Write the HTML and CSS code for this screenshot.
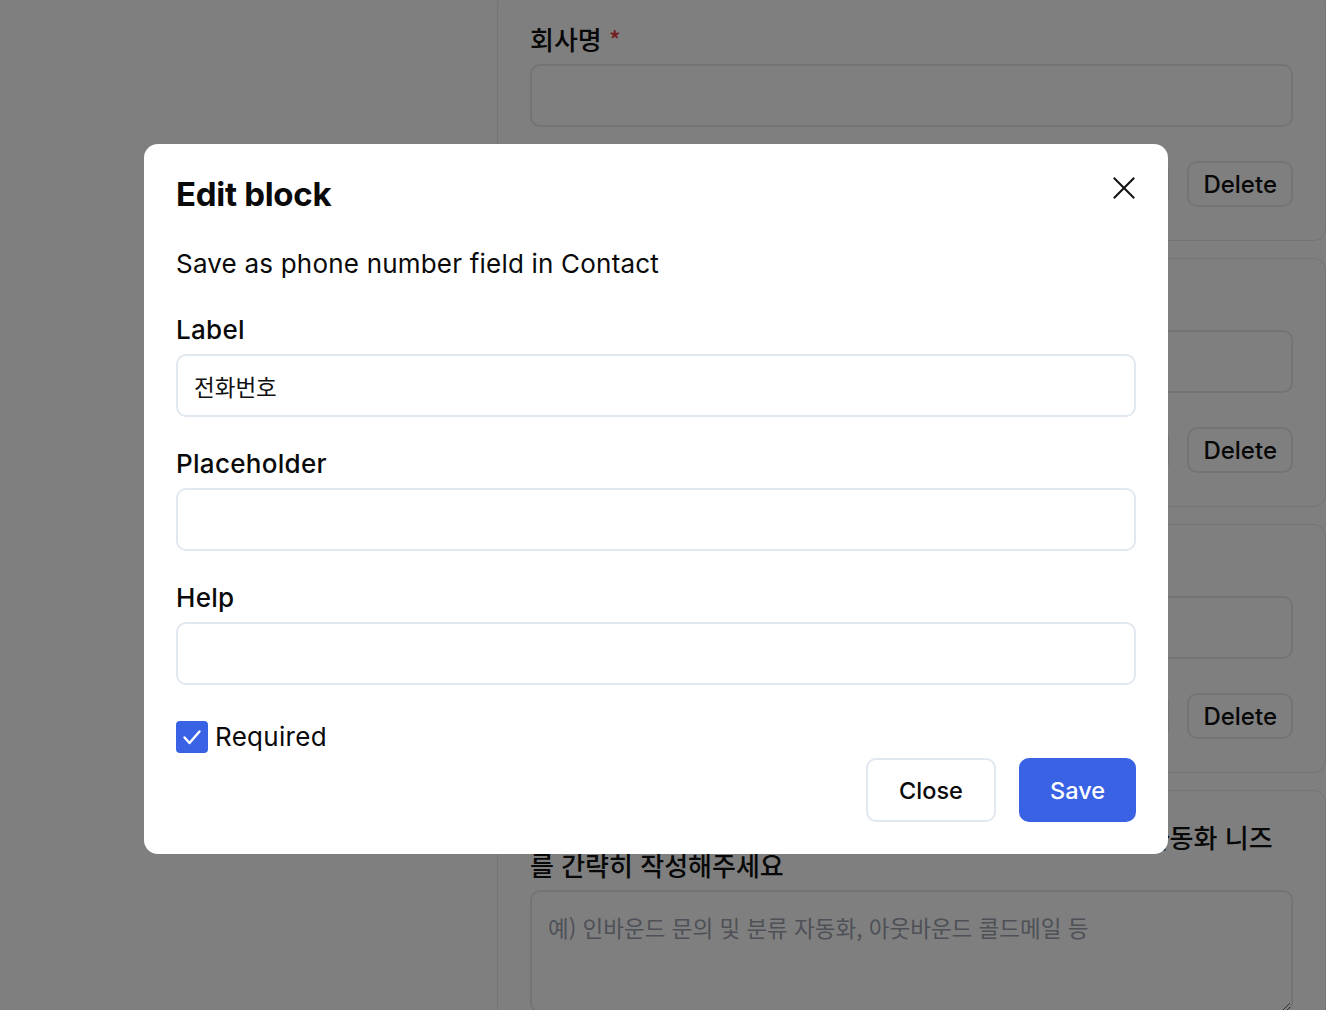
FILE: index.html
```html
<!DOCTYPE html>
<html lang="ko">
<head>
<meta charset="utf-8">
<title>Form builder</title>
<link rel="stylesheet" href="styles.css">
</head>
<body>
<div class="app">
  <aside class="sidebar"></aside>
  <main class="editor">
    <div class="blocks">
      <section class="block">
        <div class="block-label">회사명 <span class="req">*</span></div>
        <div class="block-input"></div>
        <div class="block-actions"><button class="btn-outline">Edit</button><button class="btn-outline">Delete</button></div>
      </section>
      <section class="block">
        <div class="block-label">전화번호 <span class="req">*</span></div>
        <div class="block-input"></div>
        <div class="block-actions"><button class="btn-outline">Edit</button><button class="btn-outline">Delete</button></div>
      </section>
      <section class="block">
        <div class="block-label">이메일 <span class="req">*</span></div>
        <div class="block-input"></div>
        <div class="block-actions"><button class="btn-outline">Edit</button><button class="btn-outline">Delete</button></div>
      </section>
      <section class="block">
        <div class="block-label">현재 꼭 해결하고 싶은 과제와 에이전트 도입을 통한 업무 자동화 니즈<br>를 간략히 작성해주세요</div>
        <textarea class="block-textarea" placeholder="예) 인바운드 문의 및 분류 자동화, 아웃바운드 콜드메일 등"></textarea>
      </section>
    </div>
  </main>
</div>

<div class="overlay">
  <div class="modal" role="dialog" aria-labelledby="modal-title">
    <div class="modal-header">
      <h2 id="modal-title" class="modal-title">Edit block</h2>
      <button class="icon-btn" aria-label="Close">
        <svg width="24" height="24" viewBox="0 0 24 24" fill="none" stroke="#111" stroke-width="2" stroke-linecap="square"><path d="M2.5 2.5 L21.5 21.5 M21.5 2.5 L2.5 21.5"/></svg>
      </button>
    </div>
    <p class="modal-desc">Save as phone number field in Contact</p>
    <label class="field">
      <span class="field-label">Label</span>
      <input class="field-input" type="text" value="전화번호">
    </label>
    <label class="field">
      <span class="field-label">Placeholder</span>
      <input class="field-input" type="text">
    </label>
    <label class="field">
      <span class="field-label">Help</span>
      <input class="field-input" type="text">
    </label>
    <div class="check">
      <span class="check-box">
        <svg width="32" height="32" viewBox="0 0 32 32" fill="none" stroke="#fff" stroke-width="2.4" stroke-linecap="round" stroke-linejoin="round"><polyline points="8.5,16.5 13.5,22 23.5,10.5"/></svg>
      </span>
      <span class="check-text">Required</span>
    </div>
    <div class="modal-footer">
      <button class="btn btn-secondary">Close</button>
      <button class="btn btn-primary">Save</button>
    </div>
  </div>
</div>
</body>
</html>
```

FILE: styles.css
```css
* { box-sizing: border-box; }

html, body {
  margin: 0;
  padding: 0;
  background: #fff;
  font-family: Inter, "Noto Sans CJK KR", sans-serif;
  color: #111;
  overflow: hidden;
  height: 1010px;
}

.app {
  display: flex;
  height: 1010px;
}

.sidebar {
  width: 497px;
  flex: none;
}

.editor {
  flex: 1;
  min-width: 0;
}

.blocks {
  display: flex;
  flex-direction: column;
  gap: 17px;
  margin-top: -8px;
}

.block {
  border: 1px solid #e6e8ec;
  border-radius: 12px;
  padding: 32px 32px 33px;
}

.block-label {
  font-family: "Noto Sans CJK KR", sans-serif;
  font-size: 26px;
  line-height: 28px;
  font-weight: 500;
  margin-bottom: 11px;
  color: #111;
  white-space: nowrap;
}

.req {
  color: #e53e3e;
  font-family: "Noto Sans CJK KR", sans-serif;
  font-size: 24px;
  line-height: 28px;
  vertical-align: top;
}

.block-input {
  height: 63px;
  border: 2px solid #e6e8ec;
  border-radius: 10px;
}

.block-actions {
  margin-top: 34px;
  display: flex;
  justify-content: flex-end;
  gap: 18px;
}

.btn-outline {
  height: 46px;
  padding: 0 14px;
  border: 2px solid #e6e8ec;
  border-radius: 10px;
  background: #fff;
  font-family: Inter, sans-serif;
  font-size: 24px;
  font-weight: 500;
  color: #111;
}

.block-textarea {
  display: block;
  width: 100%;
  height: 123px;
  border: 2px solid #e6e8ec;
  border-radius: 10px;
  padding: 20px 16px;
  font-family: "Noto Sans CJK KR", sans-serif;
  font-size: 22.5px;
  line-height: 30px;
  resize: vertical;
}

.block-textarea::placeholder {
  color: #9ca3af;
}

/* modal */
.overlay {
  position: fixed;
  inset: 0;
  background: rgba(0, 0, 0, 0.5);
  display: flex;
  align-items: flex-start;
  justify-content: flex-start;
  padding: 144px 0 0 144px;
}

.modal {
  width: 1024px;
  background: #fff;
  border-radius: 14px;
  padding: 32px;
  display: flex;
  flex-direction: column;
  color: #0a0a0a;
}

.modal-header {
  display: flex;
  justify-content: space-between;
  align-items: flex-start;
  height: 36px;
}

.modal-title {
  margin: 0;
  font-size: 33px;
  line-height: 36px;
  font-weight: 700;
  letter-spacing: -0.3px;
}

.icon-btn {
  width: 24px;
  height: 24px;
  padding: 0;
  border: 0;
  background: none;
  display: block;
}

.icon-btn svg { display: block; }

.modal-desc {
  margin: 36px 0 0;
  font-size: 26px;
  line-height: 32px;
  letter-spacing: 0.2px;
}

.field {
  display: flex;
  flex-direction: column;
  gap: 8px;
  margin-top: 31px;
}

.modal-desc + .field { margin-top: 34px; }

.field-label {
  font-size: 26px;
  line-height: 32px;
  font-weight: 500;
  letter-spacing: 0.3px;
}

.field-input {
  height: 63px;
  width: 100%;
  border: 2px solid #e2e8f0;
  border-radius: 10px;
  padding: 0 16px;
  font-family: "Noto Sans CJK KR", sans-serif;
  font-size: 22.5px;
  color: #111;
  background: #fff;
  outline: none;
}

.check {
  margin-top: 36px;
  display: flex;
  align-items: center;
  gap: 7px;
  height: 32px;
}

.check-box {
  width: 32px;
  height: 32px;
  border-radius: 4px;
  background: rgb(57, 99, 228);
  display: block;
}

.check-box svg { display: block; }

.check-text {
  font-size: 26px;
  line-height: 32px;
  letter-spacing: 0.3px;
}

.modal-footer {
  margin-top: 5px;
  display: flex;
  justify-content: flex-end;
  gap: 23px;
}

.btn {
  height: 64px;
  padding: 0;
  border-radius: 10px;
  font-family: Inter, sans-serif;
  font-size: 23.5px;
  font-weight: 500;
}

.btn-secondary {
  width: 130px;
  background: #fff;
  border: 2px solid #e2e8f0;
  color: #0a0a0a;
}

.btn-primary {
  width: 117px;
  background: rgb(57, 99, 228);
  border: 2px solid rgb(57, 99, 228);
  color: #fff;
}
```
